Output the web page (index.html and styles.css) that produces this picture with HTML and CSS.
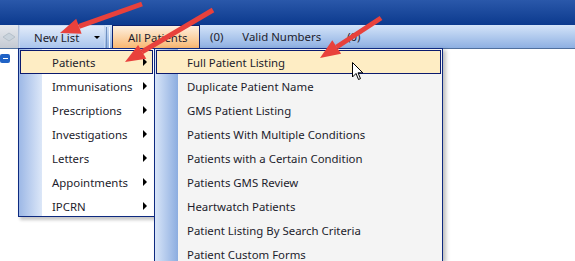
FILE: index.html
```html
<!DOCTYPE html>
<html lang="en">
<head>
  <meta charset="UTF-8" />
  <title>Patient Lists</title>
  <link rel="stylesheet" href="styles.css">
</head>
<body>
  <div class="titlebar"></div>

  <div class="toolbar">
    <div class="tool-left">
      <svg width="14" height="10" viewBox="0 0 14 10"><path d="M1 5 L7 1 L13 5 L7 9 Z" fill="#c9d3dc" stroke="#b5c0ca"/></svg>
    </div>
    <div class="btn-newlist">
      <span>New List</span>
      <span class="drop-arrow"></span>
    </div>
    <div class="grip"></div>
    <div class="btn-all">All Patients</div>
    <span class="tool-text count-1">(0)</span>
    <span class="tool-text valid">Valid Numbers</span>
    <span class="tool-text count-2">(0)</span>
  </div>

  <div class="content">
    <div class="tree-minus"></div>
  </div>

  <!-- main dropdown -->
  <div class="menu menu-main">
    <div class="menu-item active">Patients<span class="sub-arrow"></span></div>
    <div class="menu-item">Immunisations<span class="sub-arrow"></span></div>
    <div class="menu-item">Prescriptions<span class="sub-arrow"></span></div>
    <div class="menu-item">Investigations<span class="sub-arrow"></span></div>
    <div class="menu-item">Letters<span class="sub-arrow"></span></div>
    <div class="menu-item">Appointments<span class="sub-arrow"></span></div>
    <div class="menu-item">IPCRN<span class="sub-arrow"></span></div>
  </div>

  <!-- patients submenu -->
  <div class="menu menu-sub">
    <div class="menu-item active">Full Patient Listing</div>
    <div class="menu-item">Duplicate Patient Name</div>
    <div class="menu-item">GMS Patient Listing</div>
    <div class="menu-item">Patients With Multiple Conditions</div>
    <div class="menu-item">Patients with a Certain Condition</div>
    <div class="menu-item">Patients GMS Review</div>
    <div class="menu-item">Heartwatch Patients</div>
    <div class="menu-item">Patient Listing By Search Criteria</div>
    <div class="menu-item">Patient Custom Forms</div>
  </div>

  <!-- annotation arrows -->
  <svg class="arrows" width="575" height="261" viewBox="0 0 575 261">
    <g stroke="#e8413c" stroke-width="5" stroke-linecap="butt" fill="#e8413c">
      <line x1="142" y1="4" x2="79" y2="26.3" />
      <polygon points="60,33 81.6,33.8 76.2,18.8" stroke="none"/>
      <line x1="213" y1="10" x2="142" y2="51.8" />
      <polygon points="125,62 146.3,58.7 138.1,44.9" stroke="none"/>
      <line x1="381" y1="18" x2="336.7" y2="47" />
      <polygon points="320,58 341.1,53.7 332.3,40.3" stroke="none"/>
    </g>
  </svg>

  <svg class="cursor" width="12" height="19" viewBox="0 0 12 19">
    <path d="M0.5 0.5 L0.5 15 L4 11.5 L6.5 17.5 L8.5 16.6 L6 10.8 L10.8 10.8 Z" fill="#fff" stroke="#000" stroke-width="1" stroke-linejoin="round"/>
  </svg>
</body>
</html>
```

FILE: styles.css
```css
body {
  margin: 0;
  width: 575px;
  height: 261px;
  overflow: hidden;
  background: #ffffff;
  font-family: "Noto Sans", "Open Sans", sans-serif;
  font-size: 11.4px;
  color: #1c1c2c;
  position: relative;
}

.titlebar {
  height: 25px;
  background: linear-gradient(#2a58aa, #0c3a8e);
}

.toolbar {
  height: 23px;
  border-bottom: 1px solid #50709e;
  background: linear-gradient(#d4e4f9, #8eb0e2);
  display: flex;
  align-items: stretch;
}
.tool-left {
  width: 18px;
  background: linear-gradient(#e6e9ee, #c4cad3);
  border-right: 1px solid #aebfd9;
  display: flex;
  align-items: center;
  justify-content: center;
}
.btn-newlist {
  border: 1px solid #c8d8f0;
  border-bottom: none;
  background: linear-gradient(#e2ecfa, #a9c4ec);
  display: flex;
  align-items: center;
  padding-left: 14px;
  box-sizing: border-box;
  width: 86px;
}
.drop-arrow {
  margin-left: auto;
  margin-right: 4px;
  width: 0;
  height: 0;
  border-left: 3px solid transparent;
  border-right: 3px solid transparent;
  border-top: 3px solid #000;
}
.grip {
  width: 2px;
  margin: 2px 2px 0 1px;
  border-left: 1px solid #6f8fbf;
  border-right: 1px solid #f4f8ff;
}
.btn-all {
  width: 88px;
  box-sizing: border-box;
  border: 1px solid #0d2270;
  border-bottom: none;
  background: linear-gradient(#fdf0e0, #f9b872);
  display: flex;
  align-items: center;
  padding-left: 15px;
}
.tool-text {
  display: flex;
  align-items: center;
}
.count-1 { margin-left: 10px; }
.valid { margin-left: 19px; }
.count-2 { margin-left: 26px; }

.content {
  padding-top: 5px;
}
.tree-minus {
  width: 10px;
  height: 9px;
  border-radius: 2px;
  background: #2063c6;
  position: relative;
}
.tree-minus::after {
  content: "";
  position: absolute;
  left: 3px;
  top: 4px;
  width: 5px;
  height: 1px;
  background: #fff;
}

/* dropdown menus */
.menu {
  position: absolute;
  top: 48px;
  box-sizing: border-box;
  border: 1px solid #0e2a80;
  padding: 1px 1px;
}
.menu-main {
  left: 18px;
  width: 137px;
  height: 169px;
  background: linear-gradient(to right, #9db8e6 0, #dce7f8 23px, #ffffff 23px);
  box-shadow: 2px 3px 3px rgba(0,0,0,0.22);
}
.menu-sub {
  left: 154px;
  width: 289px;
  height: 213px;
  border-bottom: none;
  overflow: hidden;
  background: linear-gradient(to right, #d8e5f8 0, #8cade0 23px, #f4f4f4 23px);
  box-shadow: 3px 2px 4px rgba(0,0,0,0.25);
}
.menu-item {
  height: 24px;
  box-sizing: border-box;
  display: flex;
  align-items: center;
  position: relative;
  white-space: nowrap;
}
.menu-main .menu-item { padding-left: 32px; }
.menu-sub .menu-item { padding-left: 31px; }
.menu-item.active {
  background: #feedc4;
  border: 1px solid #0b1a6e;
  padding-left: 31px;
}
.menu-sub .menu-item.active { padding-left: 30px; }
.sub-arrow {
  position: absolute;
  right: 6px;
  top: 8px;
  width: 0;
  height: 0;
  border-top: 4px solid transparent;
  border-bottom: 4px solid transparent;
  border-left: 4px solid #000;
}
.menu-item.active .sub-arrow { right: 5px; top: 7px; }

.arrows {
  position: absolute;
  left: 0;
  top: 0;
  pointer-events: none;
}
.cursor {
  position: absolute;
  left: 352px;
  top: 62px;
}
```
